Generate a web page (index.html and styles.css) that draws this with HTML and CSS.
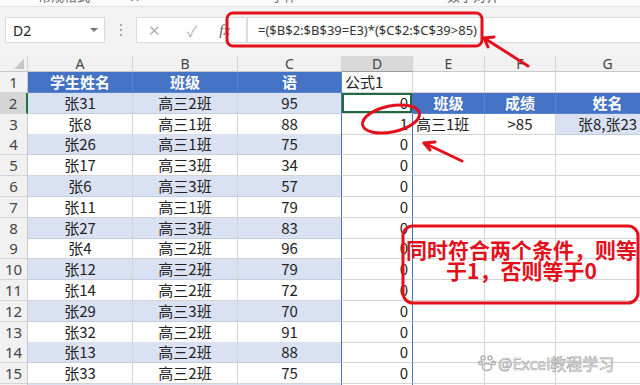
FILE: index.html
```html
<!DOCTYPE html>
<html>
<head>
<meta charset="utf-8">
<link rel="stylesheet" href="styles.css">
</head>
<body>
<div class="top">
  <span class="t1">常规格式</span><span class="t2">.1</span><span class="t3">字体</span><span class="t4">数字对齐</span>
</div>
<div class="fbar">
  <div class="namebox"><span>D2</span><span class="dd"></span></div>
  <div class="dots"><i></i><i></i><i></i></div>
  <div class="btns"><span class="x">✕</span><span class="ok">✓</span><span class="fx">fx</span></div>
  <div class="finput">=($B$2:$B$39=E3)*($C$2:$C$39&gt;85)</div>
</div>
<div class="gap"></div>
<div class="sheet">
  <div class="row colhdr">
    <div class="corner"><span class="tri"></span></div>
    <div class="ch">A</div><div class="ch">B</div><div class="ch">C</div><div class="ch chsel">D</div><div class="ch">E</div><div class="ch">F</div><div class="ch">G</div>
  </div>
  <div class="row">
    <div class="rh">1</div>
    <div class="c hd">学生姓名</div><div class="c hd">班级</div><div class="c hd">语</div><div class="c lf d1">公式1</div><div class="c"></div><div class="c"></div><div class="c"></div>
  </div>
  <div class="row">
    <div class="rh rhsel">2</div>
    <div class="c bd">张31</div><div class="c bd">高三2班</div><div class="c bd cc">95</div><div class="c rt dd1 sel">0</div><div class="c hd">班级</div><div class="c hd">成绩</div><div class="c hd">姓名</div>
  </div>
  <div class="row">
    <div class="rh">3</div>
    <div class="c">张8</div><div class="c">高三1班</div><div class="c cc">88</div><div class="c rt dd1">1</div><div class="c lf">高三1班</div><div class="c">&gt;85</div><div class="c bd">张8,张23</div>
  </div>
  <div class="row">
    <div class="rh">4</div>
    <div class="c bd">张26</div><div class="c bd">高三1班</div><div class="c bd cc">75</div><div class="c rt dd1">0</div><div class="c"></div><div class="c"></div><div class="c"></div>
  </div>
  <div class="row">
    <div class="rh">5</div>
    <div class="c">张17</div><div class="c">高三3班</div><div class="c cc">34</div><div class="c rt dd1">0</div><div class="c"></div><div class="c"></div><div class="c"></div>
  </div>
  <div class="row">
    <div class="rh">6</div>
    <div class="c bd">张6</div><div class="c bd">高三3班</div><div class="c bd cc">57</div><div class="c rt dd1">0</div><div class="c"></div><div class="c"></div><div class="c"></div>
  </div>
  <div class="row">
    <div class="rh">7</div>
    <div class="c">张11</div><div class="c">高三1班</div><div class="c cc">79</div><div class="c rt dd1">0</div><div class="c"></div><div class="c"></div><div class="c"></div>
  </div>
  <div class="row">
    <div class="rh">8</div>
    <div class="c bd">张27</div><div class="c bd">高三3班</div><div class="c bd cc">83</div><div class="c rt dd1">0</div><div class="c"></div><div class="c"></div><div class="c"></div>
  </div>
  <div class="row">
    <div class="rh">9</div>
    <div class="c">张4</div><div class="c">高三2班</div><div class="c cc">96</div><div class="c rt dd1">0</div><div class="c"></div><div class="c"></div><div class="c"></div>
  </div>
  <div class="row">
    <div class="rh">10</div>
    <div class="c bd">张12</div><div class="c bd">高三2班</div><div class="c bd cc">79</div><div class="c rt dd1">0</div><div class="c"></div><div class="c"></div><div class="c"></div>
  </div>
  <div class="row">
    <div class="rh">11</div>
    <div class="c">张14</div><div class="c">高三2班</div><div class="c cc">72</div><div class="c rt dd1">0</div><div class="c"></div><div class="c"></div><div class="c"></div>
  </div>
  <div class="row">
    <div class="rh">12</div>
    <div class="c bd">张29</div><div class="c bd">高三3班</div><div class="c bd cc">70</div><div class="c rt dd1">0</div><div class="c"></div><div class="c"></div><div class="c"></div>
  </div>
  <div class="row">
    <div class="rh">13</div>
    <div class="c">张32</div><div class="c">高三2班</div><div class="c cc">91</div><div class="c rt dd1">0</div><div class="c"></div><div class="c"></div><div class="c"></div>
  </div>
  <div class="row">
    <div class="rh">14</div>
    <div class="c bd">张13</div><div class="c bd">高三2班</div><div class="c bd cc">88</div><div class="c rt dd1">0</div><div class="c"></div><div class="c"></div><div class="c"></div>
  </div>
  <div class="row">
    <div class="rh">15</div>
    <div class="c">张33</div><div class="c">高三2班</div><div class="c cc">75</div><div class="c rt dd1">0</div><div class="c"></div><div class="c"></div><div class="c"></div>
  </div>
  <div class="row">
    <div class="rh">16</div>
    <div class="c bd">张23</div><div class="c bd">高三1班</div><div class="c bd cc">90</div><div class="c rt dd1">1</div><div class="c"></div><div class="c"></div><div class="c"></div>
  </div>
</div>

<svg class="marks" width="640" height="385" viewBox="0 0 640 385">
  <g fill="none" stroke="#e3101c" stroke-width="3" stroke-linecap="round" stroke-linejoin="round">
    <rect x="227" y="13" width="255" height="33" rx="6"/>
    <path d="M528 66 L484 38"/>
    <path d="M494 37 L484 38 L488 47"/>
    <ellipse cx="391" cy="119" rx="29" ry="13" transform="rotate(-12 391 119)"/>
    <path d="M462 161 L424 143"/>
    <path d="M435 142 L424 143 L430 150"/>
    <rect x="403" y="226" width="235" height="77" rx="10"/>
  </g>
</svg>
<div class="callout">同时符合两个条件，则等<br>于1，否则等于0</div>
<div class="wm">
  <svg width="18" height="18" viewBox="0 0 18 18"><g fill="none" stroke="#b0b0b0" stroke-width="1.4"><circle cx="5" cy="4" r="2"/><circle cx="12" cy="4" r="2"/><circle cx="2.5" cy="9" r="1.8"/><circle cx="15.5" cy="9" r="1.8"/><ellipse cx="9" cy="13" rx="4.5" ry="3.5"/></g></svg>
  <span>@Excel教程学习</span>
</div>
</body>
</html>
```
FILE: styles.css
```css
* { box-sizing: border-box; }
body {
  margin: 0;
  width: 640px;
  height: 385px;
  overflow: hidden;
  position: relative;
  background: #f3f3f3;
  font-family: "Noto Sans", "Noto Sans CJK SC", sans-serif;
  color: #222;
}
.top {
  height: 7px;
  background: #fbfbfb;
  border-bottom: 1px solid #e2e2e2;
  overflow: hidden;
  font-size: 13px;
  line-height: 13px;
  color: #666;
  display: flex;
}
.top span { margin-top: -10px; }
.t1 { margin-left: 38px; }
.t2 { margin-left: 40px; }
.t3 { margin-left: 130px; }
.t4 { margin-left: 150px; }
.fbar {
  height: 41px;
  display: flex;
  align-items: flex-start;
  padding: 10px 0 0 5px;
}
.namebox {
  width: 100px;
  height: 26px;
  background: #fff;
  border: 1px solid #d9d9d9;
  display: flex;
  align-items: center;
  justify-content: space-between;
  padding: 0 6px 0 7px;
  font-size: 14px;
}
.dd {
  width: 0; height: 0;
  border-left: 4px solid transparent;
  border-right: 4px solid transparent;
  border-top: 4px solid #777;
}
.dots {
  width: 31px;
  height: 26px;
  display: flex;
  flex-direction: column;
  align-items: center;
  justify-content: center;
  gap: 3px;
}
.dots i { width: 2px; height: 2px; background: #aaa; display: block; }
.btns {
  width: 111px;
  height: 26px;
  background: #fff;
  border: 1px solid #dcdcdc;
  display: flex;
  align-items: center;
  font-size: 15px;
  color: #b3b3b3;
}
.btns .x { margin-left: 11px; }
.btns .ok { margin-left: 26px; }
.btns .fx { margin-left: 22px; font-style: italic; font-family: "Liberation Serif", serif; color: #555; font-size: 15px; }
.finput {
  flex: 1;
  height: 26px;
  background: #fff;
  border: 1px solid #dcdcdc;
  border-right: none;
  font-size: 13px;
  line-height: 24px;
  padding-left: 10px;
  color: #333;
  white-space: nowrap;
}
.gap { height: 8px; }
.sheet { background: #fff; }
.row {
  display: grid;
  grid-template-columns: 28px 105px 105px 104px 71px 72px 71px 104px;
  height: 20.8px;
  font-family: "Noto Sans CJK SC", sans-serif;
  font-size: 15px;
}
.colhdr { height: 16px; background: #f1f1f1; }
.corner { border-right: 1px solid #d4d4d4; border-bottom: 1px solid #c8c8c8; position: relative; }
.tri {
  position: absolute; right: 3px; bottom: 2px;
  width: 0; height: 0;
  border-left: 10px solid transparent;
  border-bottom: 10px solid #c6c6c6;
}
.ch {
  border-right: 1px solid #d4d4d4;
  border-bottom: 1px solid #c8c8c8;
  font-family: "Noto Sans", sans-serif;
  font-size: 14px;
  line-height: 15px;
  text-align: center;
  color: #444;
}
.chsel { background: #d9d9d9; border-bottom: 1px solid #9b9b9b; }
.rh {
  background: #f1f1f1;
  border-right: 1px solid #c8c8c8;
  border-bottom: 1px solid #d4d4d4;
  font-family: "Noto Sans", sans-serif;
  font-size: 15px;
  line-height: 20px;
  text-align: center;
  color: #444;
}
.rhsel { background: #d6d6d6; border-right: 2px solid #217346; }
.c {
  border-right: 1px solid #d4d4d4;
  border-bottom: 1px solid #d4d4d4;
  text-align: center;
  line-height: 20px;
  white-space: nowrap;
  overflow: hidden;
  color: #222;
}
.lf { text-align: left; padding-left: 3px; }
.rt { text-align: right; padding-right: 4px; }
.cc { border-right-color: #4e72ad; }
.dd1 { border-right: 1px solid #4e72ad; }
.hd {
  background: #4472c4;
  color: #fff;
  font-weight: bold;
  border-color: #5a84cc;
}
.bd { background: #d9e1f2; border-bottom-color: #c3cde0; }
.sel { box-shadow: inset 0 0 0 2px #1e6b41; }
.marks { position: absolute; left: 0; top: 0; }
.callout {
  position: absolute;
  left: 403px;
  top: 239px;
  width: 237px;
  text-align: center;
  font-family: "Noto Sans CJK SC", sans-serif;
  font-weight: bold;
  font-size: 21px;
  line-height: 21px;
  color: #e3101c;
  white-space: nowrap;
}
.wm {
  position: absolute;
  left: 478px;
  top: 351px;
  display: flex;
  align-items: center;
  gap: 2px;
  font-family: "Noto Sans", "Noto Sans CJK SC", sans-serif;
  font-size: 16px;
  color: rgba(255,255,255,0.7);
  -webkit-text-stroke: 0.7px #a8a8a8;
}
```
